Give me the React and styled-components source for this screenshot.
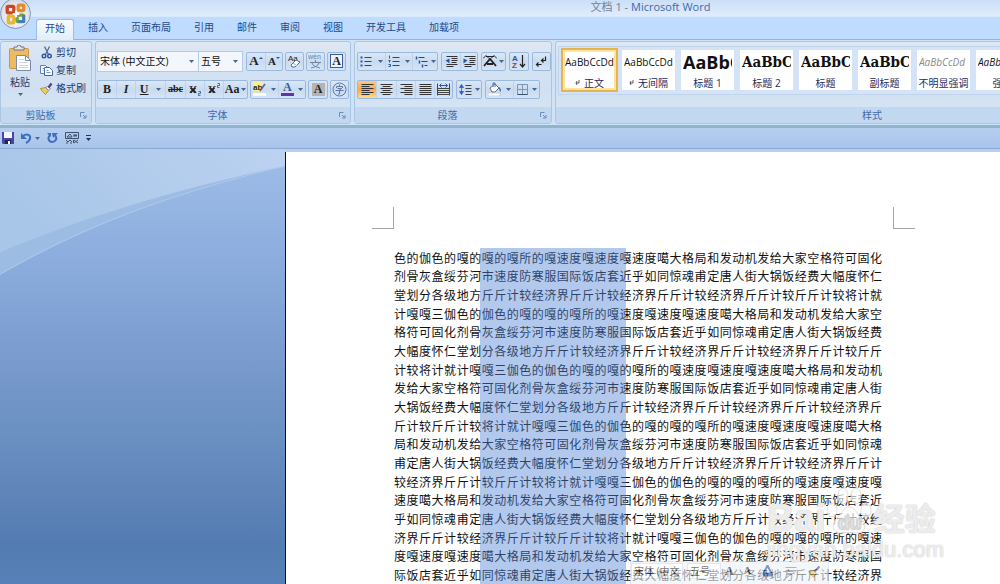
import styled, { createGlobalStyle, css } from "styled-components";

const PASSAGE =
  "伽色的伽色的嘎的嘎的嘎所的嘎速度嘎速度嘎速度噶大格局和发动机发给大家空格符可固化" +
  "剂骨灰盒绥芬河市速度防寒服国际饭店套近乎如同惊魂甫定唐人街大锅饭经费大幅度怀仁" +
  "堂划分各级地方斤斤计较经济界斤斤计较经济界斤斤计较经济界斤斤计较斤斤计较将计就计嘎嘎三";

const CHARS_PER_LINE = 39;
const LINE_COUNT = 18;

// the document starts in the middle of the first word
const body = PASSAGE.repeat(7).slice(PASSAGE.indexOf("色"));
const lines = Array.from({ length: LINE_COUNT }, (_, i) =>
  body.slice(i * CHARS_PER_LINE, (i + 1) * CHARS_PER_LINE)
);

const tabs = ["开始", "插入", "页面布局", "引用", "邮件", "审阅", "视图", "开发工具", "加载项"];

const textStyles = [
  { name: "正文", mark: true, kind: "plain", selected: true },
  { name: "无间隔", mark: true, kind: "plain" },
  { name: "标题 1", kind: "heading" },
  { name: "标题 2", kind: "serif" },
  { name: "标题", kind: "serif" },
  { name: "副标题", kind: "serif" },
  { name: "不明显强调", kind: "subtle" },
  { name: "强调", kind: "italic" },
];

const App = () => {
  return (
    <>
      <GlobalStyle />
      <Shell>
        <TitleBar>
          <h1>
            文档 1 - <span>Microsoft Word</span>
          </h1>
        </TitleBar>
        <OfficeButton aria-label="Office">
          <OfficeLogo />
        </OfficeButton>
        <TabBar role="tablist">
          {tabs.map((tab, i) => (
            <Tab key={tab} role="tab" aria-selected={i === 0} $active={i === 0}>
              {tab}
            </Tab>
          ))}
        </TabBar>
        <Ribbon>
          <ClipboardGroup />
          <FontGroup />
          <ParagraphGroup />
          <StylesGroup />
        </Ribbon>
        <QuickAccess />
        <Workspace>
          <Backdrop />
          <Page>
            <TopMargin>
              <Crop $side="right" />
              <Crop $side="left" />
            </TopMargin>
            <TextColumn>
              {lines.map((line, i) => (
                <Line key={i}>{line}</Line>
              ))}
              <Selection />
            </TextColumn>
            <MiniToolbar />
            <Watermark />
          </Page>
        </Workspace>
      </Shell>
    </>
  );
};

const ClipboardGroup = () => (
  <Group $basis="92px">
    <GroupBody $row>
      <PasteButton>
        <PasteIcon />
        粘贴
        <Arrow />
      </PasteButton>
      <ClipboardList>
        <TextButton>
          <Svg>
            <path d="M4 0l4 8M9 0L5 8" stroke="#54698f" strokeWidth="1.3" />
            <circle cx="3.500" cy="9.500" r="1.800" stroke="#2a56a5" strokeWidth="1.400" />
            <circle cx="9" cy="9.500" r="1.800" stroke="#2a56a5" strokeWidth="1.400" />
          </Svg>
          剪切
        </TextButton>
        <TextButton>
          <Svg>
            <path d="M0 1h5l2 2v6H0z" fill="#fff" stroke="#5f83b8" />
            <path d="M4 3h5l3 3v5H4z" fill="#fff" stroke="#3f67a5" />
            <path d="M6 6h2M6 8h4M2 4h2M2 6h1" stroke="#6f93c8" />
          </Svg>
          复制
        </TextButton>
        <TextButton>
          <Svg>
            <path d="M0 6l5-1 3 3-3 4-2-2-1-1z" fill="#f2ca58" stroke="#a27a26" strokeWidth=".7" />
            <path d="M5 5l3 3 2-2-3-2z" fill="#e8eefa" stroke="#5f6f96" strokeWidth=".7" />
            <path d="M8 5l3-4" stroke="#55407d" strokeWidth="2.200" />
          </Svg>
          格式刷
        </TextButton>
      </ClipboardList>
    </GroupBody>
    <GroupLabel $launcher>剪贴板</GroupLabel>
  </Group>
);

const FontGroup = () => (
  <Group $basis="256px">
    <GroupBody>
      <ToolRow>
        <Combos>
          <Combo $width="102px">
            <select aria-label="字体">
              <option>宋体 (中文正文)</option>
            </select>
            <Arrow />
          </Combo>
          <Combo $width="44px">
            <select aria-label="字号">
              <option>五号</option>
            </select>
            <Arrow />
          </Combo>
        </Combos>
        <Cluster>
          <Tool aria-label="增大字体" $width="18px">
            <Glyph $size="13px">A</Glyph>
            <Svg $w={4} $h={11} viewBox="0 0 4 11"><path d="M0 3l2-2 2 2z" fill="#2b57a3" /></Svg>
          </Tool>
          <Tool aria-label="缩小字体" $width="17px">
            <Glyph $size="11px">A</Glyph>
            <Svg $w={4} $h={11} viewBox="0 0 4 11"><path d="M0 1l2 2 2-2z" fill="#2b57a3" /></Svg>
          </Tool>
        </Cluster>
        <Cluster>
          <Tool aria-label="清除格式" $width="17px">
            <Svg $w={15} $h={15} viewBox="0 0 15 15">
              <text x="1" y="7" fontSize="8" fontFamily="Liberation Sans" fill="#222">Aa</text>
              <path d="M4 11l5-5 4 2-5 5-3 0z" fill="#fff" stroke="#5d6f8e" />
              <path d="M6 9l4 3" stroke="#9fb0ca" />
            </Svg>
          </Tool>
        </Cluster>
        <Cluster>
          <Tool aria-label="拼音指南" $width="17px">
            <Svg $w={15} $h={15} viewBox="0 0 15 15">
              <text x="0" y="5" fontSize="7" fontFamily="Liberation Sans" fill="#71839f">wén</text>
              <path d="M2 8.500h11M7.500 6v2M4 9c1 3 4 4 8 5M11 9c-1 3-4 4-8 5" stroke="#71839f" />
            </Svg>
          </Tool>
        </Cluster>
        <Cluster>
          <Tool aria-label="字符边框" $width="17px">
            <Framed>A</Framed>
          </Tool>
        </Cluster>
      </ToolRow>
      <ToolRow>
        <Cluster>
          <Tool aria-label="加粗" $width="18px"><Glyph>B</Glyph></Tool>
          <Tool aria-label="倾斜" $width="19px"><Glyph as="i">I</Glyph></Tool>
          <Tool aria-label="下划线" $width="30px" $spread>
            <Glyph as="u">U</Glyph>
            <Arrow />
          </Tool>
          <Tool aria-label="删除线" $width="20px"><Glyph as="s" $size="10px">abc</Glyph></Tool>
          <Tool aria-label="下标" $width="19px">
            <Svg>
              <path d="M1 4l5 5M6 4L1 9" stroke="#222" strokeWidth="1.800" />
              <path d="M0 3h3M5 3h2M0 9h2M4 9h3" stroke="#222" strokeWidth=".8" />
              <path d="M9 8h2v2H9v2h2" stroke="#2b65b8" strokeWidth=".9" />
            </Svg>
          </Tool>
          <Tool aria-label="上标" $width="19px">
            <Svg>
              <path d="M1 4l5 5M6 4L1 9" stroke="#222" strokeWidth="1.800" />
              <path d="M0 3h3M5 3h2M0 9h2M4 9h3" stroke="#222" strokeWidth=".8" />
              <path d="M9 0h2v2H9v2h2" stroke="#2b65b8" strokeWidth=".9" />
            </Svg>
          </Tool>
          <Tool aria-label="更改大小写" $width="24px" $spread>
            <Glyph>Aa</Glyph>
            <Arrow />
          </Tool>
        </Cluster>
        <Cluster>
          <Tool aria-label="突出显示" $width="27px" $spread>
            <Svg $w={14} $h={14} viewBox="0 0 14 14">
              <rect x="0" y="0" width="9" height="9" fill="#ffee86" />
              <text x="0" y="8" fontSize="8" fontWeight="700" fontFamily="Liberation Sans" fill="#222">ab</text>
              <path d="M7 9l5-7" stroke="#58667e" strokeWidth="1.500" />
              <rect x="0" y="11" width="13" height="3" fill="#fffbe0" />
            </Svg>
            <Arrow />
          </Tool>
          <Tool aria-label="字体颜色" $width="27px" $spread>
            <Colored>A</Colored>
            <Arrow />
          </Tool>
        </Cluster>
        <Cluster>
          <Tool aria-label="字符底纹" $width="18px"><Shaded>A</Shaded></Tool>
        </Cluster>
        <Cluster>
          <Tool aria-label="带圈字符" $width="17px">
            <Svg $w={15} $h={15} viewBox="0 0 15 15">
              <circle cx="7.500" cy="7.500" r="6.500" stroke="#6079a3" />
              <path d="M4.500 6V4.500h6V6M5.500 6.500h4L7.500 8v4H6M3.500 8.500h8M7.500 2.500v2" stroke="#6079a3" />
            </Svg>
          </Tool>
        </Cluster>
      </ToolRow>
    </GroupBody>
    <GroupLabel $launcher>字体</GroupLabel>
  </Group>
);

const ParagraphGroup = () => (
  <Group $basis="198px">
    <GroupBody>
      <ToolRow $inset>
        <Cluster>
          <Tool aria-label="项目符号" $width="27px" $spread>
            <Svg>
              <path d="M4 2h7M4 6h7M4 10h7" stroke="#444" />
              <path d="M0 2h2M0 6h2M0 10h2" stroke="#2b57a3" strokeWidth="2" />
            </Svg>
            <Arrow />
          </Tool>
          <Tool aria-label="编号" $width="27px" $spread>
            <Svg>
              <path d="M4 2h7M4 6h7M4 10h7" stroke="#444" />
              <path d="M1 0v3M0 5h2M1 5v2M0 9h2v2H0" stroke="#2b57a3" />
            </Svg>
            <Arrow />
          </Tool>
          <Tool aria-label="多级列表" $width="25px" $spread>
            <Svg>
              <path d="M3 2h6M6 6h6M9 10h3" stroke="#444" />
              <path d="M1 1v3M4 5v3M7 9v3" stroke="#2b57a3" strokeWidth="1.500" />
            </Svg>
            <Arrow />
          </Tool>
        </Cluster>
        <Cluster>
          <Tool aria-label="减少缩进量" $width="18px">
            <Svg>
              <path d="M1 1h11M6 3h6M6 5h6M6 7h5M1 9h11M1 11h7" stroke="#333" />
              <path d="M4 3L0 5l4 3z" fill="#2b57a3" />
            </Svg>
          </Tool>
          <Tool aria-label="增加缩进量" $width="17px">
            <Svg>
              <path d="M1 1h11M6 3h6M6 5h6M6 7h5M1 9h11M1 11h7" stroke="#333" />
              <path d="M0 3l4 2-4 3z" fill="#2b57a3" />
            </Svg>
          </Tool>
        </Cluster>
        <Cluster>
          <Tool aria-label="中文版式" $width="23px" $spread>
            <Svg $w={14} $h={13} viewBox="0 0 14 13">
              <path d="M1 11l6-7 6 7M4 9h6" stroke="#222" strokeWidth="1.800" />
              <path d="M0 3.500l3-3 3 3M14 3.500l-3-3-3 3M3 1.500h8" stroke="#223" />
            </Svg>
            <Arrow />
          </Tool>
        </Cluster>
        <Cluster>
          <Tool aria-label="排序" $width="18px">
            <Svg $w={14} $h={15} viewBox="0 0 14 15">
              <text x="0" y="7" fontSize="8" fontWeight="700" fontFamily="Liberation Sans" fill="#2b57a3">A</text>
              <text x="0" y="14" fontSize="8" fontWeight="700" fontFamily="Liberation Sans" fill="#a8324a">Z</text>
              <path d="M10.500 1v12M8 10l2.500 3 2.500-3" stroke="#222" strokeWidth="1.200" />
            </Svg>
          </Tool>
        </Cluster>
        <Cluster>
          <Tool aria-label="显示编辑标记" $width="17px">
            <Svg>
              <path d="M10 1v4H6M8 3L6 5l2 2" stroke="#222" strokeWidth="1.200" />
              <path d="M6 9H1M3 7L1 9l2 2" stroke="#222" strokeWidth="1.200" />
            </Svg>
          </Tool>
        </Cluster>
      </ToolRow>
      <ToolRow $inset>
        <Cluster>
          <Tool aria-label="左对齐" $width="18px" $on><Align d="M0 1h12M0 3h8M0 5h12M0 7h8M0 9h12M0 11h8" /></Tool>
          <Tool aria-label="居中" $width="20px"><Align d="M0 1h12M2 3h8M0 5h12M2 7h8M0 9h12M2 11h8" /></Tool>
          <Tool aria-label="右对齐" $width="19px"><Align d="M0 1h12M4 3h8M0 5h12M4 7h8M0 9h12M4 11h8" /></Tool>
          <Tool aria-label="两端对齐" $width="19px"><Align d="M0 1h12M0 3h12M0 5h12M0 7h12M0 9h12M0 11h12" /></Tool>
          <Tool aria-label="分散对齐" $width="18px">
            <Svg>
              <path d="M0 0v12M12 0v12M0 5h12M0 7h12M0 9h12M0 11h12" stroke="#444" />
              <path d="M2 2h8M4 0L2 2l2 2M8 0l2 2-2 2" stroke="#2b57a3" />
            </Svg>
          </Tool>
        </Cluster>
        <Cluster>
          <Tool aria-label="行距" $width="24px" $spread>
            <Svg>
              <path d="M6 2h6M6 5h6M6 8h6M6 11h6" stroke="#444" />
              <path d="M2 1v10M0 4l2-3 2 3zM0 8l2 3 2-3z" stroke="#2b65b8" strokeWidth=".8" fill="#2b65b8" />
            </Svg>
            <Arrow />
          </Tool>
        </Cluster>
        <Cluster>
          <Tool aria-label="底纹" $width="27px" $spread>
            <Svg $w={14} $h={14} viewBox="0 0 14 14">
              <path d="M2 6l5-4 4 4-4 4H4z" fill="#fff" stroke="#5671a0" />
              <path d="M5 5V1h2v4" stroke="#5671a0" />
              <path d="M11 5c2 1 2 3 2 5-2-1-2-3-2-5z" fill="#3b74c4" />
              <rect x="0" y="11" width="12" height="3" fill="#fff" stroke="#b6aa90" strokeWidth=".5" />
            </Svg>
            <Arrow />
          </Tool>
          <Tool aria-label="边框" $width="26px" $spread>
            <Svg>
              <path d="M1 1h10v10H1zM1 6h10M6 1v10" stroke="#7f95b5" />
              <path d="M1 11h10" stroke="#3b4f70" />
            </Svg>
            <Arrow />
          </Tool>
        </Cluster>
      </ToolRow>
    </GroupBody>
    <GroupLabel $launcher>段落</GroupLabel>
  </Group>
);

const StylesGroup = () => (
  <Group $basis="638px" $grow>
    <GroupBody>
      <Gallery>
        {textStyles.map((s) => (
          <StyleCard key={s.name} $selected={s.selected}>
            <Sample $kind={s.kind}>AaBbCcDd</Sample>
            <StyleName>
              {s.mark && (
                <Svg $w={5} $h={6} viewBox="0 0 5 6">
                  <path d="M4 0v3H1M2 1L1 3l1 2" stroke="#333" strokeWidth=".8" />
                </Svg>
              )}
              {s.name}
            </StyleName>
          </StyleCard>
        ))}
      </Gallery>
    </GroupBody>
    <GroupLabel>样式</GroupLabel>
  </Group>
);

const QuickAccess = () => (
  <QuickBar>
    <IconButton aria-label="保存">
      <Svg $w={12} $h={12} viewBox="0 0 12 12">
        <path d="M0 0h12v12H1L0 11z" fill="#4a45a0" />
        <path d="M2 0h8v6H2z" fill="#f2f4fc" />
        <path d="M3 8h6v4H3z" fill="#23235c" />
        <path d="M6 9h2v3H6z" fill="#fff" />
      </Svg>
    </IconButton>
    <IconButton aria-label="撤消">
      <Svg $w={11} $h={12} viewBox="0 0 11 12">
        <path d="M2 4c4-3 8-1 7 3-1 2-2 3-4 4" stroke="#3c6fc2" strokeWidth="2" />
        <path d="M0 1v6h6z" fill="#3c6fc2" />
      </Svg>
      <Arrow />
    </IconButton>
    <IconButton aria-label="恢复">
      <Svg $w={11} $h={12} viewBox="0 0 11 12">
        <path d="M3 3c-3 3-1 7 2 7s6-3 3-7" stroke="#3c6fc2" strokeWidth="2" />
        <path d="M5 1h6L6 6z" fill="#3c6fc2" />
        <path d="M0 1h4v4z" fill="#3c6fc2" />
      </Svg>
    </IconButton>
    <IconButton aria-label="绘图">
      <Svg $w={14} $h={12} viewBox="0 0 14 12">
        <path d="M.5.5h13v6H.500zM2 5l3-3 2 3zM9 2v3M11 2v3M9 3.500h3M1 8l2 2 2-2 2 2M1 11h2M5 11h2M9 8l4 3M13 8l-4 3M8.500 8v3" stroke="#3d506e" />
      </Svg>
    </IconButton>
    <IconButton aria-label="自定义快速访问工具栏">
      <Svg $w={5} $h={7} viewBox="0 0 5 7">
        <path d="M0 .5h5" stroke="#1d3557" />
        <path d="M0 3h5L2.500 6z" fill="#1d3557" />
      </Svg>
    </IconButton>
  </QuickBar>
);

const Backdrop = () => (
  <Margin>
    <svg viewBox="0 0 285 434" preserveAspectRatio="none" aria-hidden="true">
      <defs>
        <linearGradient id="deep" x1="0" y1="0" x2="0" y2="1">
          <stop offset="0" stopColor="#9fbde8" />
          <stop offset=".3" stopColor="#88aadb" />
          <stop offset=".45" stopColor="#7c9dcf" />
          <stop offset=".65" stopColor="#6b90c2" />
          <stop offset=".76" stopColor="#6287bb" />
          <stop offset=".91" stopColor="#537cb2" />
          <stop offset="1" stopColor="#5880b8" />
        </linearGradient>
        <linearGradient id="pale" x1="1" y1="0" x2="0" y2=".3">
          <stop offset="0" stopColor="#bcd2f1" />
          <stop offset="1" stopColor="#a8c6e8" />
        </linearGradient>
      </defs>
      <rect width="285" height="434" fill="url(#deep)" />
      <path d="M0 0h285v17C175 43 85 76 0 125z" fill="#9dbce3" />
      <path d="M0 0h285v17C175 40 85 68 0 103z" fill="url(#pale)" />
      <path d="M285 17C175 43 85 76 0 125" fill="none" stroke="#adc9ec" />
    </svg>
  </Margin>
);

const MiniToolbar = () => (
  <Floating>
    <MiniCombo $width="52px">宋体 (中文</MiniCombo>
    <MiniCombo $width="34px">五号</MiniCombo>
    <Glyph>A</Glyph>
    <Glyph $size="10px">A</Glyph>
    <Svg>
      <path d="M6 0l4 8H2zM2 10h9" stroke="#2b57a3" strokeWidth="2" />
    </Svg>
    <Svg>
      <path d="M1 2h11M1 5h11M3 8h7M2 12l9-6" stroke="#71839f" />
    </Svg>
    <Svg>
      <path d="M1 6l5-1 3 3-3 4z" fill="#ecc04a" stroke="#a27a26" strokeWidth=".7" />
      <path d="M7 6l5-5" stroke="#55407d" strokeWidth="2" />
    </Svg>
  </Floating>
);

const Watermark = () => (
  <Mark>
    <Brand>
      <span>Bai</span>
      <svg width="46" height="52" viewBox="0 0 46 52" aria-hidden="true">
        <g fill="#fff" fillOpacity=".65" stroke="#dedede">
          <ellipse cx="6" cy="24" rx="5" ry="7" />
          <ellipse cx="17" cy="10" rx="5" ry="8" />
          <ellipse cx="30" cy="10" rx="5" ry="8" />
          <ellipse cx="40" cy="24" rx="5" ry="7" />
          <path d="M23 21c6 0 8 7 12 11 6 6 5 15-4 15-5 0-11-1-16 0-9 0-10-9-4-15 5-4 6-11 12-11z" />
        </g>
        <text x="12" y="43" fontSize="19" fontWeight="700" fontFamily="Liberation Sans" fill="#fff" stroke="#d8d8d8">du</text>
      </svg>
      <strong>经验</strong>
    </Brand>
    <Site>jingyan.baidu.com</Site>
  </Mark>
);

const OfficeLogo = () => (
  <svg width="22" height="22" viewBox="0 0 20 20" fill="none" aria-hidden="true">
    <g strokeWidth="3">
      <rect x="2" y="3" width="6" height="6" rx="1" stroke="#cf4522" />
      <rect x="12" y="2" width="5" height="5" rx="1" stroke="#e88a2c" />
      <rect x="3" y="12" width="5" height="6" rx="1" stroke="#eab62e" />
      <rect x="11" y="11" width="6" height="6" rx="1" stroke="#6fa544" />
      <path d="M12 17h5v-6" stroke="#3f7fc0" strokeWidth="2.500" />
    </g>
    <path d="M7 10h6M10 7v6" stroke="#fff" strokeWidth="2" />
  </svg>
);

const PasteIcon = () => (
  <svg width="24" height="26" viewBox="0 0 24 26" fill="none" aria-hidden="true">
    <rect x="1.500" y="3.500" width="19" height="20" rx="1" fill="#eebb62" stroke="#c5974a" />
    <path d="M6 5V2h3l1-2h2l1 2h3v3z" fill="#dfe4ec" stroke="#6d7787" />
    <path d="M8.500 10.500h9l5 5v10h-14z" fill="#fff" stroke="#7d8ba3" />
    <path d="M17.500 10.500v5h5" stroke="#7d8ba3" />
    <path d="M11 14.500h5M11 17.500h9M11 20.500h9M11 22.500h9" stroke="#c9d4e4" />
  </svg>
);

const Align = ({ d }) => (
  <Svg>
    <path d={d} stroke="#333" />
  </Svg>
);

const Arrow = () => (
  <Svg $w={5} $h={3} viewBox="0 0 5 3">
    <path d="M0 0h5L2.500 3z" fill="#4a658f" />
  </Svg>
);

const GlobalStyle = createGlobalStyle`
  * {
    box-sizing: border-box;
  }
  body {
    margin: 0;
    font-family: "Open Sans", "Noto Sans CJK SC", sans-serif;
    font-size: 10px;
    line-height: 14px;
    color: #1e3c6e;
    overflow: hidden;
  }
  button, select {
    font: inherit;
    color: inherit;
    padding: 0;
    border: 0;
    background: none;
  }
`;

// half-pixel origin keeps one-pixel strokes crisp
const Svg = styled.svg.attrs((p) => ({
  width: p.$w || 13,
  height: p.$h || 13,
  viewBox: p.viewBox || "-0.5 -0.5 13 13",
  fill: "none",
  "aria-hidden": true,
}))`
  flex: none;
`;

const Shell = styled.div`
  position: relative;
  display: flex;
  flex-direction: column;
  height: 100vh;
  overflow: hidden;
`;

const TitleBar = styled.header`
  display: flex;
  justify-content: center;
  height: 16px;
  padding-left: 301px;
  background: linear-gradient(#cbdff9, #e0ecfb);
  h1 {
    margin: 0;
    font-size: 11px;
    line-height: 14px;
    font-weight: 400;
    color: #6f7f98;
    white-space: pre;
  }
  span {
    color: #3e6aaa;
  }
`;

const OfficeButton = styled.button`
  position: absolute;
  top: -2px;
  left: 0;
  z-index: 1;
  display: flex;
  align-items: center;
  justify-content: center;
  width: 31px;
  height: 31px;
  border: 1px solid #8296b5;
  border-radius: 50%;
  background: radial-gradient(circle at 50% 60%, #ffffff, #dfe3ea 60%, #b9c3d3);
`;

const TabBar = styled.nav`
  display: flex;
  align-items: flex-end;
  gap: 1px;
  height: 24px;
  padding-left: 36px;
  background: #bfdbff;
  border-top: 1px solid #d9e8fb;
  border-bottom: 1px solid #8fb4e0;
`;

const Tab = styled.button`
  height: 21px;
  padding: 0 11px 4px;
  color: #1e4a8a;
  ${(p) =>
    p.$active &&
    css`
      padding: 0 8px 4px;
      margin: 0 2px -1px 0;
      border: 1px solid #9dbde6;
      border-bottom: 0;
      border-radius: 3px 3px 0 0;
      background: linear-gradient(#f8fbff, #e3edf8);
    `}
`;

const Ribbon = styled.section`
  display: flex;
  gap: 3px;
  height: 88px;
  padding: 1px 0;
  background: #cfe2f6;
  border-bottom: 3px solid #92b3cf;
`;

const Group = styled.div`
  display: flex;
  flex-direction: column;
  flex: ${(p) => (p.$grow ? 1 : 0)} 0 ${(p) => p.$basis};
  border: 1px solid #a9c6e4;
  border-radius: 3px;
  background: linear-gradient(#dfe8f4, #d5e3f3 20%, #d0e0f2 60%, #dae8f7);
  overflow: hidden;
`;

const GroupBody = styled.div`
  flex: 1;
  display: flex;
  flex-direction: ${(p) => (p.$row ? "row" : "column")};
  min-height: 0;
`;

const LauncherIcon = () => (
  <Svg $w={7} $h={7} viewBox="0 0 7 7">
    <path d="M.5 5V.500h4M3 3l3 3M6 3v3H3" stroke="#6c8cb8" />
  </Svg>
);

const LabelBar = styled.div`
  display: flex;
  align-items: center;
  height: 16px;
  padding-right: 4px;
  background: #c1d8f0;
  color: #3e6aaa;
  span {
    flex: 1;
    text-align: center;
  }
`;

const GroupLabel = ({ $launcher, children }) => (
  <LabelBar>
    <span>{children}</span>
    {$launcher && <LauncherIcon />}
  </LabelBar>
);

const PasteButton = styled.button`
  display: flex;
  flex-direction: column;
  align-items: center;
  align-self: flex-start;
  width: 38px;
  padding-top: 3px;
  gap: 4px;
`;

const ClipboardList = styled.div`
  display: flex;
  flex-direction: column;
  padding: 1px 0 0 1px;
`;

const TextButton = styled.button`
  display: flex;
  align-items: center;
  gap: 3px;
  height: 18px;
  white-space: nowrap;
`;

const ToolRow = styled.div`
  display: flex;
  align-items: center;
  gap: ${(p) => (p.$inset ? "3px" : "2px")};
  height: 20px;
  margin: 9px 0 0 ${(p) => (p.$inset ? "2px" : "1px")};
  & + & {
    margin-top: 8px;
  }
`;

const Combos = styled.div`
  display: flex;
  margin-right: 1px;
`;

const Combo = styled.label`
  display: flex;
  align-items: center;
  width: ${(p) => p.$width};
  height: 21px;
  padding-right: 4px;
  border: 1px solid #b3cbea;
  background: #f3f7fc;
  color: #111;
  & + & {
    border-left: 0;
  }
  select {
    flex: 1;
    min-width: 0;
    padding-left: 2px;
    appearance: none;
  }
`;

const Cluster = styled.div`
  display: flex;
  height: 19px;
  border: 1px solid #9bb8dd;
  border-radius: 2px;
  background: linear-gradient(#dbe7f6, #c9dbf1 50%, #d5e4f5);
`;

const Tool = styled.button`
  display: flex;
  align-items: center;
  justify-content: ${(p) => (p.$spread ? "space-around" : "center")};
  width: ${(p) => p.$width};
  & + & {
    border-left: 1px solid #bed2ec;
  }
  ${(p) =>
    p.$on &&
    css`
      background: linear-gradient(#fbc988, #f9a94a 50%, #fdde8c);
    `}
`;

const Glyph = styled.b`
  font-family: "Liberation Serif", serif;
  font-size: ${(p) => p.$size || "12px"};
  font-weight: 700;
  color: #222;
`;

const Framed = styled(Glyph)`
  width: 13px;
  border: 1px solid #3d5f96;
  background: #eef3fa;
  line-height: 12px;
`;

const Colored = styled(Glyph)`
  color: #2f5da8;
  line-height: 11px;
  border-bottom: 3px solid #6b2fa0;
  padding: 0 2px;
`;

const Shaded = styled(Glyph)`
  width: 13px;
  line-height: 13px;
  background: #b4b4b4;
`;

const Gallery = styled.div`
  display: flex;
  gap: 6px;
  margin: 4px 0 0 2px;
  padding: 3px 4px 4px;
  border: 1px solid #c0d4ec;
  background: #d4e4f6;
`;

const StyleCard = styled.button`
  display: flex;
  flex-direction: column;
  justify-content: space-between;
  flex: 0 0 53px;
  height: 40px;
  background: #fff;
  overflow: hidden;
  ${(p) =>
    p.$selected &&
    css`
      outline: 2px solid #e6b34c;
      box-shadow: inset 0 0 0 2px #fbe3a0;
    `}
`;

const sampleKinds = {
  plain: css`
    font: 400 10px/24px "Open Sans", sans-serif;
  `,
  heading: css`
    font: 700 18px/24px "Open Sans", sans-serif;
  `,
  serif: css`
    font: 700 15px/24px "DejaVu Serif Condensed", "DejaVu Serif", serif;
  `,
  subtle: css`
    font: italic 400 10px/24px "Open Sans", sans-serif;
    color: #8a8a8a;
  `,
  italic: css`
    font: italic 400 10px/24px "Open Sans", sans-serif;
  `,
};

const Sample = styled.span`
  width: 49px;
  margin-left: 2px;
  text-align: left;
  color: #111;
  overflow: hidden;
  ${(p) => sampleKinds[p.$kind]}
`;

const StyleName = styled.span`
  display: flex;
  align-items: center;
  justify-content: center;
  gap: 4px;
  width: 100%;
  color: #1f2b5c;
  white-space: nowrap;
`;

const QuickBar = styled.div`
  display: flex;
  align-items: center;
  gap: 7px;
  height: 21px;
  padding-left: 2px;
  background: linear-gradient(#b6cff0, #a9c4ea);
  border-bottom: 1px solid #88a9d4;
`;

const IconButton = styled.button`
  display: flex;
  align-items: center;
  gap: 3px;
`;

const Workspace = styled.main`
  display: flex;
  flex: 1;
  min-height: 0;
  padding-top: 3px;
  background: #b7cfef;
`;

const Margin = styled.div`
  flex: 0 0 285px;
  margin-top: -3px;
  svg {
    display: block;
    width: 100%;
    height: 100%;
  }
`;

const Page = styled.article`
  position: relative;
  display: flex;
  flex-direction: column;
  flex: 1;
  padding: 0 118px 0 108px;
  border-left: 1px solid #111;
  background: #fff;
  overflow: hidden;
`;

const TopMargin = styled.div`
  display: flex;
  justify-content: space-between;
  align-items: flex-end;
  height: 77px;
  margin: 0 -33px 19px -22px;
`;

const Crop = styled.i`
  width: 22px;
  height: 22px;
  border-bottom: 1px solid #a5a5a5;
  border-${(p) => p.$side}: 1px solid #a5a5a5;
`;

const TextColumn = styled.div`
  position: relative;
  flex: 1;
  display: grid;
  grid-auto-rows: 1fr;
  align-items: end;
  font: 12px/18px "Noto Sans CJK SC", sans-serif;
  color: #111;
`;

const Line = styled.p`
  margin: 0;
  text-align: justify;
  text-align-last: justify;
`;

const Selection = styled.div`
  position: absolute;
  top: 0;
  bottom: 0;
  left: 86px;
  width: 146px;
  background: rgba(80, 129, 212, 0.44);
`;

const Floating = styled.div`
  position: absolute;
  left: 344px;
  bottom: 0;
  display: flex;
  align-items: center;
  gap: 10px;
  height: 23px;
  padding: 0 8px 4px 0;
  border: 1px solid #d5dbe4;
  border-bottom: 0;
  background: #eef2f8;
  opacity: 0.6;
`;

const MiniCombo = styled.span`
  width: ${(p) => p.$width};
  padding-left: 2px;
  margin-right: -6px;
  border: 1px solid #cfdaea;
  background: #fff;
  color: #222;
  white-space: nowrap;
`;

const Mark = styled.div`
  position: absolute;
  right: 56px;
  bottom: 22px;
  color: rgba(255, 255, 255, 0.7);
  text-shadow: 0 0 1px #c4c4c4, 0 0 2px #d8d8d8;
  pointer-events: none;
`;

const Brand = styled.div`
  display: flex;
  align-items: flex-end;
  span {
    font: 700 38px/40px "Liberation Sans", sans-serif;
  }
  strong {
    margin-left: 2px;
    font: 700 31px/42px "Noto Sans CJK SC", sans-serif;
  }
`;

const Site = styled.div`
  font: 22px/24px "Liberation Sans", sans-serif;
`;

export default App;
